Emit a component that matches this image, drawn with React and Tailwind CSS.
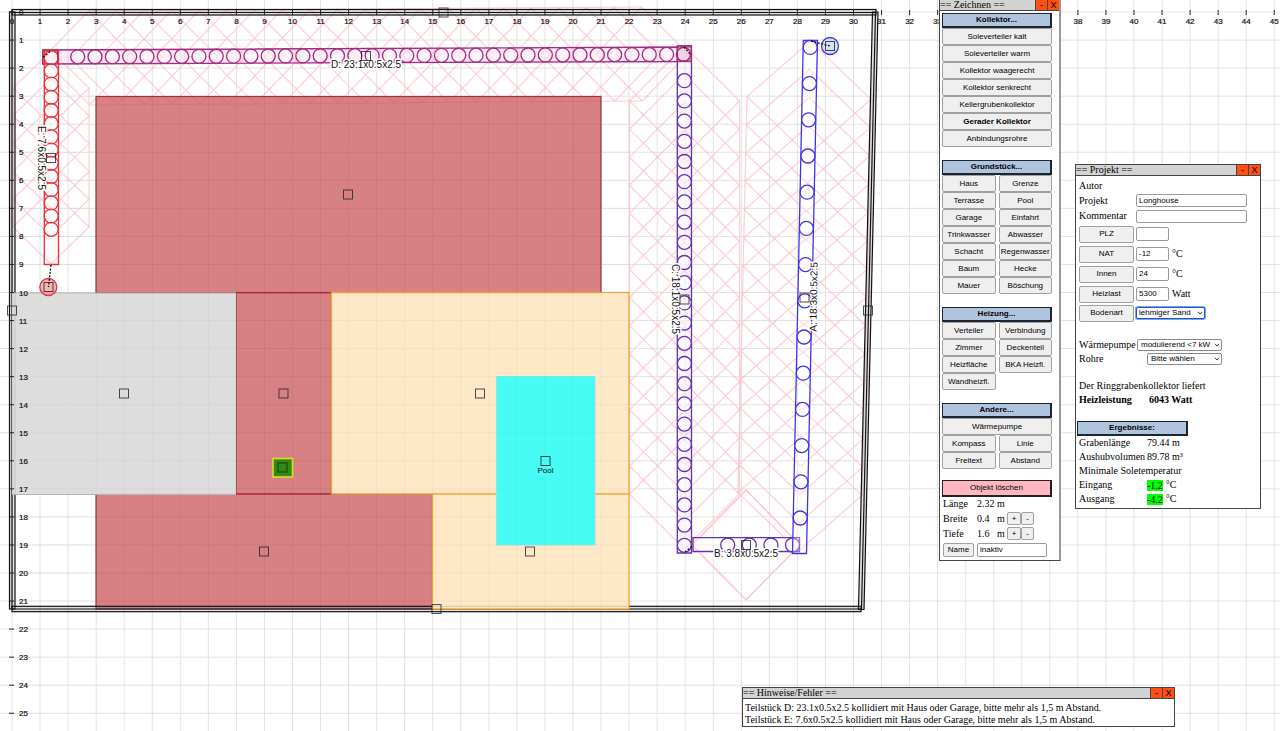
import React, { useState } from "react";

// plan scale: pixels per metre and origin
const M = 28.05;
const OX = 12;
const OY = 12;

const sans = "font-['Liberation_Sans',Arial,sans-serif]";
const serif = "font-['Liberation_Serif','Times_New_Roman',serif]";

const range = (n) => Array.from({ length: n }, (_, i) => i);

const GROUPS = [
  {
    title: "Kollektor...",
    wide: [
      "Soleverteiler kalt",
      "Soleverteiler warm",
      "Kollektor waagerecht",
      "Kollektor senkrecht",
      "Kellergrubenkollektor",
      "Gerader Kollektor",
      "Anbindungsrohre",
    ],
    half: [],
  },
  {
    title: "Grundstück...",
    wide: [],
    half: [
      "Haus", "Grenze", "Terrasse", "Pool", "Garage", "Einfahrt", "Trinkwasser",
      "Abwasser", "Schacht", "Regenwasser", "Baum", "Hecke", "Mauer", "Böschung",
    ],
  },
  {
    title: "Heizung...",
    wide: [],
    half: [
      "Verteiler", "Verbindung", "Zimmer", "Deckenteil", "Heizfläche",
      "BKA Heizfl.", "Wandheizfl.",
    ],
  },
  {
    title: "Andere...",
    wide: ["Wärmepumpe"],
    half: ["Kompass", "Linie", "Freitext", "Abstand"],
  },
];

const HANDLES = [
  [348, 194.5], [124, 393.5], [283.5, 393.5], [480, 393.5], [545.5, 461],
  [530, 551.5], [264, 551.5], [282.5, 467.5], [436.5, 609], [12, 310.5],
  [868, 310.5], [443.5, 12.5], [366, 56], [684.5, 299.5], [804.5, 297.5],
  [746, 545], [51, 158], [48.5, 287], [830, 46],
];

// Row of overlapping diamonds around a trench, plus the two outer edges
function Zone({ from, to, count, along, across }) {
  const dx = to[0] - from[0];
  const dy = to[1] - from[1];
  const len = Math.hypot(dx, dy) || 1;
  const ux = dx / len;
  const uy = dy / len;
  const ax = ux * along;
  const ay = uy * along;
  const bx = -uy * across;
  const by = ux * across;
  return (
    <g fill="none" stroke="#ffc0cb" strokeWidth="1.2" strokeOpacity="0.8">
      {range(count).map((i) => {
        const x = from[0] + (dx * i) / (count - 1);
        const y = from[1] + (dy * i) / (count - 1);
        return (
          <path
            key={i}
            d={`M${x - ax} ${y - ay}L${x + bx} ${y + by}L${x + ax} ${y + ay}L${x - bx} ${y - by}Z`}
          />
        );
      })}
      <path d={`M${from[0] + bx} ${from[1] + by}L${to[0] + bx} ${to[1] + by}`} />
      <path d={`M${from[0] - bx} ${from[1] - by}L${to[0] - bx} ${to[1] - by}`} />
    </g>
  );
}

function Trench({ points, color, tint, start, step, count }) {
  return (
    <g stroke={color} strokeWidth="1.3" fill="none">
      <polygon points={points} fill={tint} fillOpacity="0.3" />
      {range(count).map((i) => (
        <circle
          key={i}
          cx={start[0] + step[0] * i}
          cy={start[1] + step[1] * i}
          r="7"
          fill="#fff"
          fillOpacity="0.4"
        />
      ))}
    </g>
  );
}

function PlanLabel({ x, y, angle = 0, children }) {
  return (
    <text
      transform={`translate(${x} ${y}) rotate(${angle})`}
      textAnchor="middle"
      fontSize="10"
      fill="#111"
      stroke="#fff"
      strokeWidth="3"
      paintOrder="stroke"
    >
      {children}
    </text>
  );
}

function Plan() {
  const cols = range(46);
  const rows = range(26);
  return (
    <svg className={`block w-full h-screen ${sans}`} role="img" aria-label="Lageplan">
      <g stroke="#e2e2e2" strokeWidth="1">
        {range(92).map((i) => (
          <line key={`c${i}`} x1={OX + i * M} x2={OX + i * M} y1="0" y2="100%" />
        ))}
        {range(60).map((i) => (
          <line key={`r${i}`} y1={OY + i * M} y2={OY + i * M} x1="0" x2="100%" />
        ))}
      </g>

      <Zone from={[51, 88]} to={[51, 227]} count={6} along={37} across={38} />
      <Zone from={[89, 58]} to={[642, 54]} count={21} along={46} across={47} />
      <Zone from={[684.5, 101]} to={[684.5, 494]} count={15} along={55} across={55} />
      <Zone from={[809, 98]} to={[800, 494]} count={15} along={57} across={62} />
      <Zone from={[745.8, 545]} to={[746.2, 545]} count={2} along={54} across={55} />

      {/* house */}
      <g fill="#c9555a" fillOpacity="0.74" stroke="#a3323a" strokeWidth="1.2">
        <rect x="96" y="96.5" width="505" height="196.5" />
        <rect x="236" y="292.5" width="95.5" height="201.5" />
        <rect x="96" y="494" width="336.5" height="115" />
      </g>

      {/* plot boundary */}
      <g fill="#888" fillOpacity="0.25" stroke="#111" strokeWidth="1.2">
        <rect x="12" y="9.5" width="864" height="5.5" />
        <rect x="9.5" y="12" width="5.5" height="597" />
        <rect x="12" y="606.3" width="849" height="5.4" />
        <polygon points="872.5,12 878,12 864,609.5 858.5,609.5" />
        <path d="M12 12.5H875.5L861.5 609H12Z" fill="none" />
      </g>

      <rect x="12" y="293" width="224" height="201.5" fill="#dadada" fillOpacity="0.92" />
      <path d="M12 293H236M12 494.5H236" stroke="#b5b5b5" />
      <g fill="#ffe5c0" fillOpacity="0.88" stroke="#eea82c" strokeWidth="1.2">
        <rect x="331.5" y="292.5" width="297.5" height="201.5" />
        <rect x="432.5" y="494" width="196.5" height="115" />
      </g>
      <rect x="496.5" y="376.5" width="98.5" height="168.5" fill="#46fcf4" stroke="#8ee6e6" />
      <rect x="273" y="458.5" width="19.5" height="18.5" fill="#2f8b12" stroke="#d9e021" strokeWidth="1.6" />
      <text x="545.5" y="473" textAnchor="middle" fontSize="8" fill="#111">Pool</text>

      {/* faint grid over the filled areas */}
      <g stroke="#555" strokeOpacity="0.03">
        {range(20).map((i) => (
          <line key={i} x1={OX + (i + 3) * M} x2={OX + (i + 3) * M} y1="97" y2="609" />
        ))}
        {range(18).map((i) => (
          <line key={i} x1="12" x2="629" y1={OY + (i + 4) * M} y2={OY + (i + 4) * M} />
        ))}
      </g>

      <Trench points="43,50 691,47 691,61.5 43,64" color="#a32a80" tint="#f7b5e0" start={[77.7, 56.8]} step={[17.32, -0.07]} count={36} />
      <Trench points="44.3,51 58.5,51 58.5,264.5 44.3,264.5" color="#e2333c" tint="#fff0f0" start={[51.2, 57.7]} step={[0, 13.2]} count={14} />
      <rect x="42.5" y="50" width="15" height="14" fill="none" stroke="#c32b50" />
      <Trench points="677.3,46 691.5,46 691.5,553 677.3,553" color="#6430b4" tint="#f0e4ff" start={[684.4, 80.7]} step={[0, 20.2]} count={24} />
      <rect x="677.3" y="46" width="14.2" height="15" fill="#d896b8" fillOpacity="0.3" stroke="#a02668" />
      <circle cx="683.5" cy="54.3" r="7" fill="none" stroke="#a02668" strokeWidth="1.3" />
      <Trench points="693,537.7 799.5,537.7 799.5,551.5 693,551.5" color="#6430b4" tint="#ffffff" start={[727.7, 545]} step={[21.6, 0]} count={4} />
      <Trench points="803.3,40.5 817.5,40.5 806.5,553.5 792.5,553.5" color="#3f35e8" tint="#ffffff" start={[810.2, 47.4]} step={[-0.77, 36.2]} count={14} />

      {/* connections to the manifolds */}
      <circle cx="48.3" cy="287" r="8.5" fill="#f39a9a" fillOpacity="0.75" stroke="#e2333c" strokeWidth="1.3" />
      <circle cx="830" cy="46" r="8.5" fill="#c9dcf0" fillOpacity="0.8" stroke="#3f35e8" strokeWidth="1.3" />
      <g stroke="#111" strokeWidth="1.3" strokeDasharray="2 1.5" fill="none">
        <path d="M51 265L48.5 287" />
        <path d="M811 41L830 46" />
        <path d="M43 57L51 51M684 47L690 54M685 552L692 546" />
      </g>

      <PlanLabel x={366} y={68}>D: 23.1x0.5x2.5</PlanLabel>
      <PlanLabel x={746} y={557}>B: 3.8x0.5x2.5</PlanLabel>
      <PlanLabel x={38} y={158} angle={90}>E: 7.6x0.5x2.5</PlanLabel>
      <PlanLabel x={672} y={299} angle={90}>C: 18.1x0.5x2.5</PlanLabel>
      <PlanLabel x={817} y={297} angle={-89}>A: 18.3x0.5x2.5</PlanLabel>

      <g fill="none" stroke="#222" strokeOpacity="0.8">
        {HANDLES.map(([x, y]) => (
          <rect key={`${x}-${y}`} x={x - 4.5} y={y - 4.5} width="9" height="9" />
        ))}
      </g>

      {/* scales */}
      <g stroke="#222" strokeWidth="1">
        {cols.map((i) => (
          <line key={`c${i}`} x1={OX + i * M} x2={OX + i * M} y1="10" y2="15" />
        ))}
        {rows.map((i) => (
          <line key={`r${i}`} y1={OY + i * M} y2={OY + i * M} x1="9" x2="14" />
        ))}
      </g>
      <g fill="#111" stroke="#111" strokeWidth="0.2" fontSize="8">
        {cols.map((i) => (
          <text key={`c${i}`} x={OX + i * M} y="24" textAnchor="middle">{i}</text>
        ))}
        {rows.map((i) => (
          <text key={`r${i}`} x="19" y={OY + i * M + 3}>{i}</text>
        ))}
      </g>
    </svg>
  );
}

function Panel({ title, className, children }) {
  const [open, setOpen] = useState(true);
  const [visible, setVisible] = useState(true);
  if (!visible) return null;
  const btn = `w-3 border-l border-[#444] bg-[#ff4f12] text-center text-[9px] leading-[10px] ${sans}`;
  return (
    <section className={`absolute border border-[#444] bg-white text-[10px] text-black ${serif} ${className}`}>
      <header className="flex h-[11px] border-b border-[#444] bg-[#d3d3d3] leading-[10px]">
        <h2 className="flex-1">{title}</h2>
        <button className={btn} onClick={() => setOpen(!open)}>-</button>
        <button className={btn} onClick={() => setVisible(false)}>X</button>
      </header>
      {open && children}
    </section>
  );
}

function ToolButton({ children, className = "" }) {
  return (
    <button
      className={`rounded-[2px] border border-[#a0a0a0] bg-[#efefef] text-center text-[8px] leading-[10px] whitespace-nowrap text-black ${sans} ${className}`}
    >
      {children}
    </button>
  );
}

function Heading({ children }) {
  return (
    <button
      className={`block h-[15px] w-full border border-r-2 border-b-2 border-[#1c2633] bg-[#b0c4de] text-center text-[8px] leading-3 font-bold ${sans}`}
    >
      {children}
    </button>
  );
}

function Select({ id, label, children, className = "", focus = false }) {
  return (
    <span className={`relative inline-flex ${className}`}>
      <select
        id={id}
        aria-label={label}
        className={`h-3 w-full appearance-none rounded-[2px] border bg-white text-[8px] leading-[10px] outline-none ${sans} ${focus ? "border-[#1a56d6] pl-[2px] ring-1 ring-[#7ba4ee]" : "border-[#8a8a8a] pl-[3px]"}`}
      >
        {children}
      </select>
      <svg className="pointer-events-none absolute top-1 right-[2px] h-1 w-[6px]" viewBox="0 0 6 4" fill="none" stroke="#333">
        <path d="M1 0.8L3 3L5 0.8" />
      </svg>
    </span>
  );
}

const field = `rounded-[2px] border border-[#999] bg-white px-[2px] text-[8px] outline-none ${sans}`;

function DrawPanel() {
  return (
    <Panel title="== Zeichnen ==" className="top-[-1px] left-[939px] w-[122px] border-r-2 border-r-[#999]">
      <div className="pt-[2px] pr-[7px] pb-[3px] pl-[2px]">
        <div className="flex flex-col gap-[13px]">
          {GROUPS.map((g) => (
            <div key={g.title}>
              <Heading>{g.title}</Heading>
              <div className="grid grid-cols-2 gap-x-[3px]">
                {g.wide.map((t) => (
                  <ToolButton key={t} className={`col-span-2 h-[17px] ${t === "Gerader Kollektor" ? "font-bold" : ""}`}>{t}</ToolButton>
                ))}
                {g.half.map((t) => (
                  <ToolButton key={t} className="h-[17px] min-w-0">{t}</ToolButton>
                ))}
              </div>
            </div>
          ))}
        </div>
        <button className={`mt-[11px] block h-[17px] w-full border border-r-2 border-b-2 border-[#222] bg-[#ffb6c1] text-center text-[8px] leading-[10px] ${sans}`}>
          Objekt löschen
        </button>
        <div className="pl-[1px] leading-[14px]">
          <div className="flex"><span className="w-[34px]">Länge</span>2.32 m</div>
          {[["Breite", "0.4"], ["Tiefe", "1.6"]].map(([name, value]) => (
            <div key={name} className="flex h-[15px] items-center">
              <span className="w-[34px]">{name}</span>
              <span className="w-[20px]">{value}</span>
              <span className="w-[10px]">m</span>
              <ToolButton className="h-[13px] w-[14px]">+</ToolButton>
              <ToolButton className="h-[13px] w-[13px]">-</ToolButton>
            </div>
          ))}
          <div className="mt-[2px] flex gap-[3px]">
            <ToolButton className="h-[14px] w-[31px]">Name</ToolButton>
            <input aria-label="Name" className={`${field} h-[14px] w-[70px]`} defaultValue="inaktiv" />
          </div>
        </div>
      </div>
    </Panel>
  );
}

function ProjectPanel() {
  const values = [
    ["PLZ", "", ""],
    ["NAT", "-12", "°C"],
    ["Innen", "24", "°C"],
    ["Heizlast", "5300", "Watt"],
  ];
  return (
    <Panel title="== Projekt ==" className="top-[164px] left-[1075px] w-[186px]">
      <div className="px-[3px] pt-[3px] pb-[2px] leading-[14px]">
        <div>Autor</div>
        <div className="flex h-[15px] items-center">
          <label htmlFor="projekt" className="w-[57px]">Projekt</label>
          <input id="projekt" className={`${field} h-[13px] w-[111px]`} defaultValue="Longhouse" />
        </div>
        <div className="flex h-4 items-center">
          <label htmlFor="kommentar" className="w-[57px]">Kommentar</label>
          <input id="kommentar" className={`${field} h-[13px] w-[111px]`} />
        </div>
        {values.map(([name, value, unit]) => (
          <div key={name} className="flex h-5 items-center">
            <ToolButton className="mr-[2px] h-[17px] w-[55px]">{name}</ToolButton>
            <input aria-label={name} className={`${field} mr-[3px] h-[14px] w-[33px]`} defaultValue={value} />
            {unit}
          </div>
        ))}
        <div className="flex h-[18px] items-center">
          <ToolButton className="mr-[2px] h-[17px] w-[55px]">Bodenart</ToolButton>
          <Select id="boden" label="Bodenart" className="w-[69px]" focus>
            <option>lehmiger Sand</option>
          </Select>
        </div>
        <div className="mt-[15px] flex h-[15px] items-center">
          <label htmlFor="pumpe" className="w-[58px]">Wärmepumpe</label>
          <Select id="pumpe" className="w-[85px]">
            <option>modulierend &lt;7 kW</option>
          </Select>
        </div>
        <div className="flex h-[14px] items-center">
          <label htmlFor="rohre" className="w-[68px]">Rohre</label>
          <Select id="rohre" className="w-[75px]">
            <option>Bitte wählen</option>
          </Select>
        </div>
        <p className="mt-[13px]">Der Ringgrabenkollektor liefert</p>
        <p className="flex font-bold"><span className="w-[70px]">Heizleistung</span>6043 Watt</p>
        <div className="mt-[14px] -ml-[2px] w-[111px]"><Heading>Ergebnisse:</Heading></div>
        <p className="flex"><span className="w-[68px]">Grabenlänge</span>79.44 m</p>
        <p className="flex"><span className="w-[68px]">Aushubvolumen</span>89.78 m³</p>
        <p>Minimale Soletemperatur</p>
        {[["Eingang", "-1.2"], ["Ausgang", "-4.2"]].map(([name, value]) => (
          <p key={name} className="flex items-center">
            <span className="w-[68px]">{name}</span>
            <span className="mr-[3px] bg-[#00ff00] leading-[11px]">{value}</span>°C
          </p>
        ))}
      </div>
    </Panel>
  );
}

export default function App() {
  return (
    <main className="relative min-h-screen overflow-hidden bg-white">
      <Plan />
      <DrawPanel />
      <ProjectPanel />
      <Panel title="== Hinweise/Fehler ==" className="top-[687px] left-[742px] w-[433px]">
        <div className="px-[2px] pt-[3px] leading-3">
          <p>Teilstück D: 23.1x0.5x2.5 kollidiert mit Haus oder Garage, bitte mehr als 1,5 m Abstand.</p>
          <p>Teilstück E: 7.6x0.5x2.5 kollidiert mit Haus oder Garage, bitte mehr als 1,5 m Abstand.</p>
        </div>
      </Panel>
    </main>
  );
}
